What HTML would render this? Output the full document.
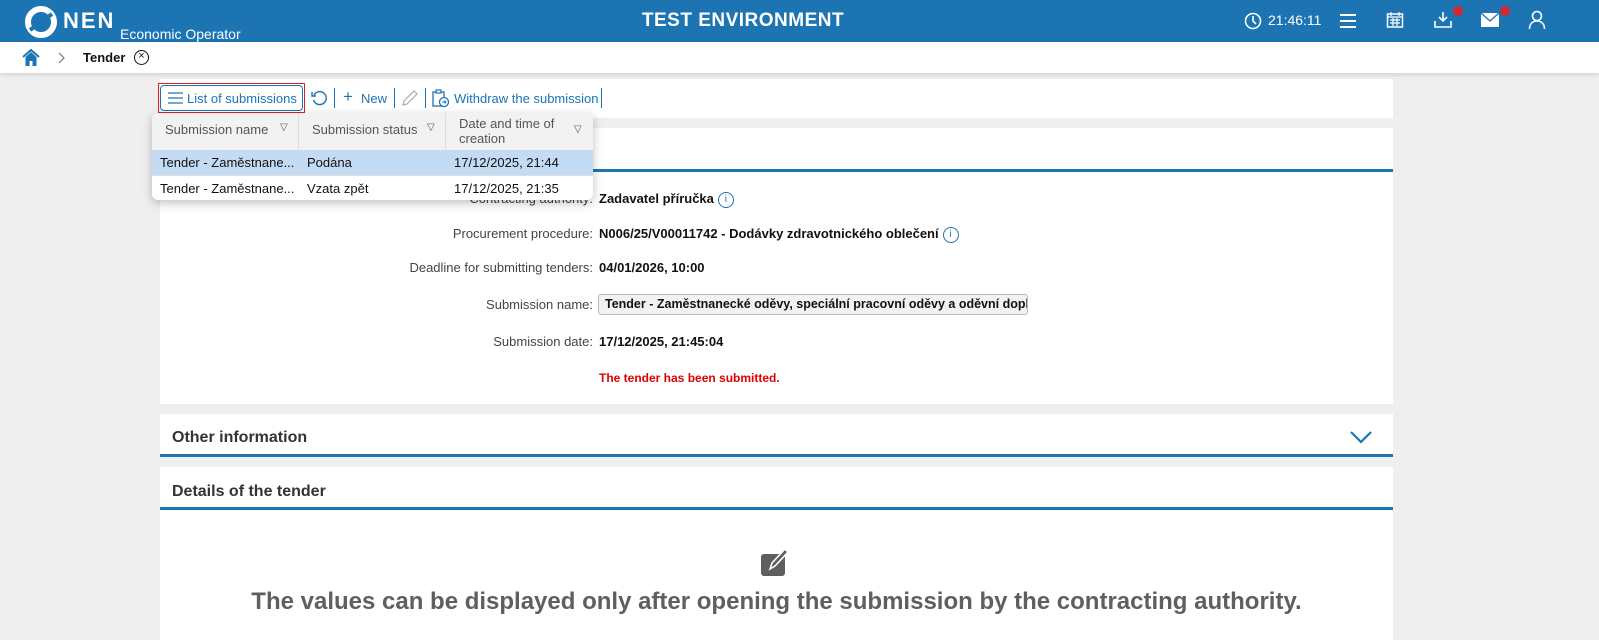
<!DOCTYPE html>
<html><head><meta charset="utf-8"><style>
*{box-sizing:border-box;margin:0;padding:0}
body{width:1599px;height:640px;overflow:hidden;background:#efefef;font-family:"Liberation Sans",Arial,sans-serif;font-size:13px;color:#111;position:relative}
.hdr{position:absolute;left:0;top:0;width:1599px;height:42px;background:#1c74b3;color:#fff}
.bc{position:absolute;left:0;top:42px;width:1599px;height:31px;background:#fff;box-shadow:0 2px 4px rgba(0,0,0,.12)}
.panel{position:absolute;left:160px;width:1233px;background:#fff}
.lbl{position:absolute;right:1006px;color:#444;font-size:13px;text-align:right;white-space:nowrap}
.val{position:absolute;left:599px;font-weight:bold;font-size:13px;white-space:nowrap}
.info{display:inline-block;width:16px;height:16px;border:1.3px solid #1c74b3;border-radius:50%;color:#1c74b3;font-size:10px;text-align:center;line-height:13px;font-weight:normal;vertical-align:middle;margin-left:4px}
.tb{position:absolute;top:91px;color:#1c74b3;font-size:13px}
.sep{position:absolute;top:88px;width:1px;height:20px;background:#1c74b3}
.dd{position:absolute;left:152px;top:113px;width:441px;height:87px;background:#fff;border-radius:6px;box-shadow:0 3px 10px rgba(0,0,0,.25);overflow:hidden}
.dd .th{position:absolute;top:0;height:37px;background:#f2f2f2;color:#555;font-size:13px;border-right:1px solid #ddd}
.dd .r{position:absolute;left:0;width:441px;height:25px;font-size:13px}
.dd span{position:absolute;top:5px}
</style></head><body>
<div class="hdr">
 <svg style="position:absolute;left:24px;top:5px" width="34" height="34" viewBox="0 0 34 34"><circle cx="17" cy="17" r="13" fill="none" stroke="#fff" stroke-width="6"/><path d="M6 25 L28 9" stroke="#1c74b3" stroke-width="4"/></svg>
 <div style="position:absolute;left:63px;top:8px;font-size:22px;font-weight:bold;letter-spacing:2px">NEN</div>
 <div style="position:absolute;left:120px;top:26px;font-size:14px">Economic Operator</div>
 <div style="position:absolute;left:0;width:1486px;text-align:center;top:10px;font-size:19px;font-weight:bold;letter-spacing:.5px">TEST ENVIRONMENT</div>
 <svg style="position:absolute;left:1244px;top:12px" width="18" height="18" viewBox="0 0 18 18"><circle cx="9" cy="9" r="7.5" fill="none" stroke="#fff" stroke-width="1.6"/><path d="M9 4v5l3 3" fill="none" stroke="#fff" stroke-width="1.6"/></svg>
 <div style="position:absolute;left:1268px;top:12px;font-size:14px">21:46:11</div>
 <svg style="position:absolute;left:1340px;top:13px" width="16" height="16"><path d="M0 2h16M0 8h16M0 14h16" stroke="#fff" stroke-width="2"/></svg>
 <svg style="position:absolute;left:1386px;top:11px" width="18" height="18"><rect x="1.5" y="3" width="15" height="13" fill="none" stroke="#fff" stroke-width="1.5"/><path d="M1 6h16M5 1v4M13 1v4M4 9h10M4 12h10M7 7v8M11 7v8" stroke="#fff" stroke-width="1.2"/></svg>
 <svg style="position:absolute;left:1433px;top:11px" width="20" height="18"><path d="M10 1v9M6 6l4 4 4-4M2 10v6h16v-6" fill="none" stroke="#fff" stroke-width="1.6"/></svg>
 <div style="position:absolute;left:1453px;top:6px;width:10px;height:10px;border-radius:50%;background:#d3282f"></div>
 <svg style="position:absolute;left:1481px;top:13px" width="18" height="14"><rect x="0" y="0" width="18" height="14" fill="#fff"/><path d="M0 0l9 8 9-8" fill="none" stroke="#1c74b3" stroke-width="1.3"/></svg>
 <div style="position:absolute;left:1500px;top:6px;width:10px;height:10px;border-radius:50%;background:#d3282f"></div>
 <svg style="position:absolute;left:1528px;top:10px" width="18" height="20"><circle cx="9" cy="6" r="4.5" fill="none" stroke="#fff" stroke-width="1.6"/><path d="M1.5 19c0-5 3-8 7.5-8s7.5 3 7.5 8" fill="none" stroke="#fff" stroke-width="1.6"/></svg>
</div>
<div class="bc">
 <svg style="position:absolute;left:22px;top:7px" width="18" height="17"><path d="M1 8L9 1l8 7" fill="none" stroke="#1c74b3" stroke-width="2"/><path d="M3.5 8v9h4v-5h3v5h4V8L9 3z" fill="#1c74b3"/></svg>
 <svg style="position:absolute;left:58px;top:10px" width="8" height="12"><path d="M1 1l5 5-5 5" fill="none" stroke="#777" stroke-width="1.2"/></svg>
 <div style="position:absolute;left:83px;top:8px;font-weight:bold;font-size:13px">Tender</div>
 <div style="position:absolute;left:134px;top:8px;width:15px;height:15px;border:1.5px solid #111;border-radius:50%;font-size:11px;line-height:11px;text-align:center">×</div>
</div>
<div class="panel" style="top:79px;height:39px"></div>
<div style="position:absolute;left:158px;top:83px;width:147px;height:30px;border:1px solid #e02020"></div>
<div style="position:absolute;left:160px;top:85px;width:143px;height:26px;border:1.5px solid #1c74b3;border-radius:4px"></div>
<svg style="position:absolute;left:168px;top:92px" width="15" height="12"><path d="M0 1h15M0 6h15M0 11h15" stroke="#1c74b3" stroke-width="1.3"/></svg>
<div class="tb" style="left:187px">List of submissions</div>
<svg style="position:absolute;left:311px;top:90px" width="17" height="17"><path d="M3 5A6.5 6.5 0 1 1 2.5 10" fill="none" stroke="#1c74b3" stroke-width="1.4"/><path d="M1 2v4h4" fill="none" stroke="#1c74b3" stroke-width="1.4"/></svg>
<div class="sep" style="left:334px"></div>
<div class="tb" style="left:343px;font-size:17px;top:87px">+</div>
<div class="tb" style="left:361px">New</div>
<div class="sep" style="left:394px"></div>
<svg style="position:absolute;left:401px;top:89px" width="18" height="18"><path d="M2 16l1-4L13 2l3 3L6 15z" fill="none" stroke="#aaa" stroke-width="1.2"/></svg>
<div class="sep" style="left:425px"></div>
<svg style="position:absolute;left:432px;top:89px" width="18" height="19"><rect x="1" y="3" width="11" height="14" fill="none" stroke="#1c74b3" stroke-width="1.3"/><rect x="4" y="1" width="5" height="3" fill="#fff" stroke="#1c74b3" stroke-width="1.2"/><circle cx="12" cy="13" r="4.5" fill="#fff" stroke="#1c74b3" stroke-width="1.3"/><path d="M10 13h4M12.5 11.5l1.5 1.5-1.5 1.5" fill="none" stroke="#1c74b3"/></svg>
<div class="tb" style="left:454px">Withdraw the submission</div>
<div class="sep" style="left:601px"></div>

<div class="panel" style="top:128px;height:276px">
 <div style="position:absolute;left:0;top:41px;width:1233px;height:3px;background:#1c74b3"></div>
</div>
<div class="lbl" style="top:191px">Contracting authority:</div>
<div class="val" style="top:191px">Zadavatel příručka<span class="info">i</span></div>
<div class="lbl" style="top:226px">Procurement procedure:</div>
<div class="val" style="top:226px">N006/25/V00011742 - Dodávky zdravotnického oblečení<span class="info">i</span></div>
<div class="lbl" style="top:260px">Deadline for submitting tenders:</div>
<div class="val" style="top:260px">04/01/2026, 10:00</div>
<div class="lbl" style="top:297px">Submission name:</div>
<div style="position:absolute;left:598px;top:294px;width:430px;height:21px;border:1px solid #bbb;border-radius:3px;background:#f2f2f2;overflow:hidden;white-space:nowrap;font-weight:bold;font-size:12.5px;padding:2px 0 0 6px">Tender - Zaměstnanecké oděvy, speciální pracovní oděvy a oděvní doplňky</div>
<div class="lbl" style="top:334px">Submission date:</div>
<div class="val" style="top:334px">17/12/2025, 21:45:04</div>
<div class="val" style="top:371px;color:#e00000;font-size:12px">The tender has been submitted.</div>

<div class="panel" style="top:414px;height:43px">
 <div style="position:absolute;left:12px;top:15px;font-size:16px;font-weight:bold;color:#333">Other information</div>
 <svg style="position:absolute;left:1190px;top:17px" width="22" height="13"><path d="M1 1l10 10L21 1" fill="none" stroke="#1c74b3" stroke-width="2.2"/></svg>
 <div style="position:absolute;left:0;top:40px;width:1233px;height:3px;background:#1c74b3"></div>
</div>
<div class="panel" style="top:467px;height:173px">
 <div style="position:absolute;left:12px;top:16px;font-size:16px;font-weight:bold;color:#333">Details of the tender</div>
 <div style="position:absolute;left:0;top:40px;width:1233px;height:3px;background:#1c74b3"></div>
 <svg style="position:absolute;left:600px;top:80px" width="32" height="30"><rect x="1" y="7" width="24" height="22" rx="3" fill="#5f5f5f"/><path d="M10 22l2-6 13-14 3 3-13 14z" fill="#5f5f5f" stroke="#fff" stroke-width="1.6"/></svg>
 <div style="position:absolute;left:0;width:1233px;text-align:center;top:121px;font-size:24px;font-weight:bold;color:#5f5f5f">The values can be displayed only after opening the submission by the contracting authority.</div>
</div>

<div class="dd">
 <div class="th" style="left:0;width:147px"><span style="left:13px;top:9px">Submission name</span><span style="left:128px;top:9px;font-size:10px">▽</span></div>
 <div class="th" style="left:147px;width:147px"><span style="left:13px;top:9px">Submission status</span><span style="left:128px;top:9px;font-size:10px">▽</span></div>
 <div class="th" style="left:294px;width:147px;border:0"><span style="left:13px;top:3px;line-height:15px">Date and time of<br>creation</span><span style="left:128px;top:11px;font-size:10px">▽</span></div>
 <div class="r" style="top:37px;background:#c4dbf4"><span style="left:8px">Tender - Zaměstnane...</span><span style="left:155px">Podána</span><span style="left:302px">17/12/2025, 21:44</span></div>
 <div class="r" style="top:62px;border-top:1px solid #ddd"><span style="left:8px">Tender - Zaměstnane...</span><span style="left:155px">Vzata zpět</span><span style="left:302px">17/12/2025, 21:35</span></div>
</div>
</body></html>
